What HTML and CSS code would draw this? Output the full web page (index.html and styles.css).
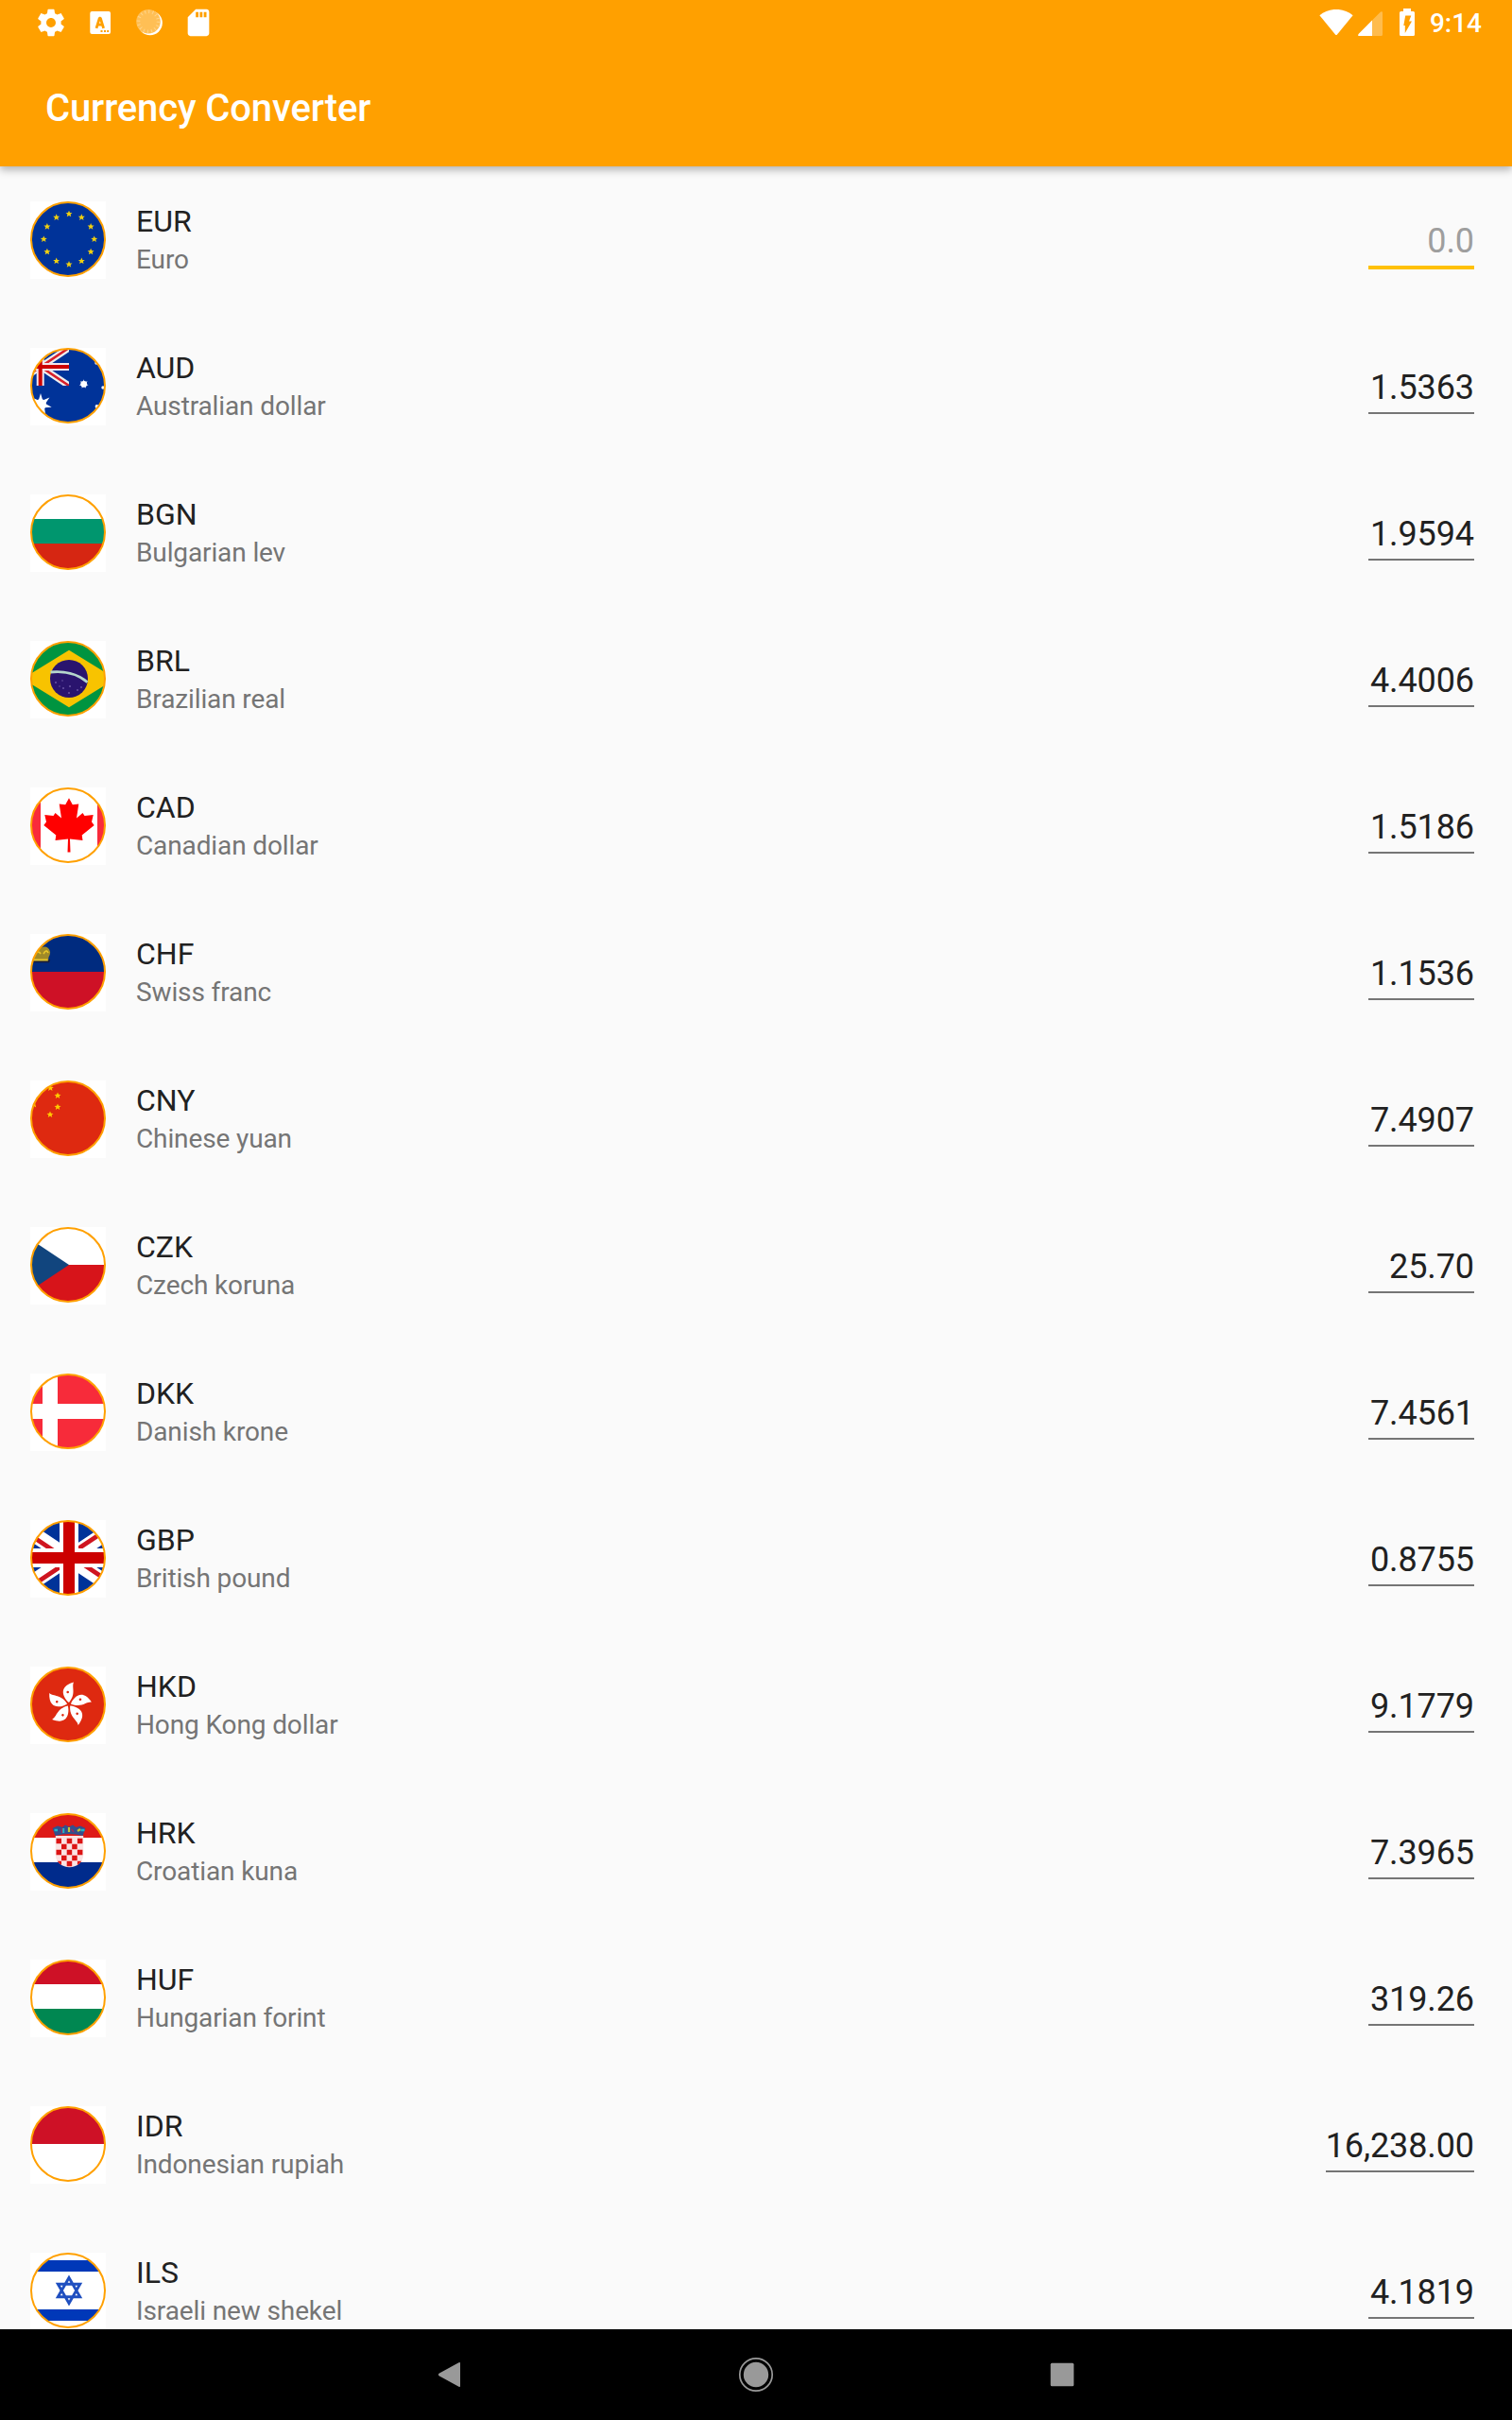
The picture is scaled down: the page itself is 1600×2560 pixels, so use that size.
FILE: index.html
```html
<!DOCTYPE html>
<html lang="en">
<head>
<meta charset="utf-8">
<title>Currency Converter</title>
<link rel="stylesheet" href="styles.css">
</head>
<body>
<svg class="defs" width="0" height="0" aria-hidden="true">
  <defs>
    <clipPath id="disc"><circle cx="40" cy="40" r="39.2"/></clipPath>
    <clipPath id="canton"><rect x="-19" y="0" width="60" height="40"/></clipPath>
    <clipPath id="shield"><path d="M26.8 24H56.2V44C56.2 52 49 57.3 41.5 57.3C34 57.3 26.8 52 26.8 44Z"/></clipPath>
    <circle id="ring" cx="40" cy="40" r="39" fill="none" stroke="#ffa000" stroke-width="2"/>
    <path id="star" d="M0-3.6L1-1.2L3.5-1.1L1.6.5L2.2 3L0 1.6L-2.2 3L-1.6.5L-3.5-1.1L-1-1.2Z"/>
    <path id="star7" d="M0-12L2.2-4.6L9.4-7.5L5-1.1L11.7 2.7L4 3.2L5.2 10.8L0 5.1L-5.2 10.8L-4 3.2L-11.7 2.7L-5-1.1L-9.4-7.5L-2.2-4.6Z"/>
    <g id="petal"><path d="M0-2C-5-6-13-18.500 5-23.500C2.500-18 8-11.500 0-2Z" fill="#fff"/><circle cx="-1.300" cy="-13" r="1.300" fill="#de2910"/></g>
  </defs>
</svg>

<div class="screen">
  <header class="appbar">
    <div class="status">
      <div class="status-left">
        <svg width="34" height="34" viewBox="0 0 24 24" fill="#fff"><path d="M19.430 12.980c.04-.32.07-.64.07-.98s-.03-.66-.07-.98l2.110-1.650c.19-.15.24-.42.12-.64l-2-3.460c-.12-.22-.39-.3-.61-.22l-2.490 1c-.52-.4-1.080-.73-1.690-.98l-.38-2.650C14.460 2.180 14.250 2 14 2h-4c-.25 0-.46.18-.49.42l-.38 2.650c-.61.25-1.170.59-1.690.98l-2.490-1c-.23-.09-.49 0-.61.22l-2 3.460c-.13.22-.07.49.12.64l2.110 1.650c-.04.32-.07.65-.07.98s.03.66.07.98l-2.110 1.650c-.19.15-.24.42-.12.64l2 3.460c.12.22.39.3.61.22l2.490-1c.52.4 1.080.73 1.690.98l.38 2.650c.03.24.24.42.49.42h4c.25 0 .46-.18.49-.42l.38-2.650c.61-.25 1.170-.59 1.690-.98l2.490 1c.23.09.49 0 .61-.22l2-3.460c.12-.22.07-.49-.12-.64l-2.110-1.650zM12 15.500c-1.930 0-3.500-1.570-3.500-3.500s1.570-3.500 3.500-3.500 3.500 1.570 3.500 3.500-1.570 3.500-3.500 3.500z"/></svg>
        <svg width="34" height="34" viewBox="0 0 34 34"><rect x="6.300" y="5" width="21.700" height="24" rx="2" fill="#fff"/><path d="M13 22.800L16.300 12.200H17.300L20.600 22.800M14.500 19.200H19.200" fill="none" stroke="#ffa000" stroke-width="2.800" stroke-linejoin="bevel"/><path d="M17.500 25h2v2h-2zM21 25h2v2h-2zM24.200 25h2v2h-2z" fill="#ffa000"/></svg>
        <svg width="34" height="34" viewBox="0 0 34 34"><circle cx="17.800" cy="17.300" r="13" fill="#fff"/><circle cx="16" cy="15.800" r="12.800" fill="#ffbf55"/><circle cx="16" cy="15.800" r="10.500" fill="none" stroke="#ffd48a" stroke-width="3.600" stroke-dasharray="1 3.120"/></svg>
        <svg width="34" height="34" viewBox="0 0 24 24" fill="#fff"><path d="M18 2h-8L4.020 8 4 20c0 1.100.9 2 2 2h12c1.100 0 2-.9 2-2V4c0-1.100-.9-2-2-2zm-6 6h-2V4h2v4zm3 0h-2V4h2v4zm3 0h-2V4h2v4z"/></svg>
      </div>
      <div class="status-right">
        <svg class="wifi" width="36" height="28" viewBox="0 0 36 28"><path d="M.4 6.200C10-2.200 26-2.200 35.600 6.200L19 26.500Q18 27.700 17 26.500Z" fill="#fff"/></svg>
        <svg class="signal" width="26" height="26" viewBox="0 0 26 26"><path d="M24 .5Q26-.5 26 1.500V24.500Q26 26 24.500 26H1.500Q-.5 26 .6 24Z" fill="#fff" opacity=".3"/><path d="M15 9.500V26H1.500Q-.5 26 .6 24Z" fill="#fff"/></svg>
        <svg class="battery" width="16" height="29" viewBox="0 0 16 29"><path d="M4 0H12V3H14.500Q16 3 16 4.500V27.500Q16 29 14.500 29H1.500Q0 29 0 27.500V4.500Q0 3 1.500 3H4Z" fill="#fff"/><path d="M6.200 7.500H12.300L10 13.500H13L5.800 26V18H4.300Z" fill="#ffa000"/></svg>
        <span class="clock">9:14</span>
      </div>
    </div>
    <div class="toolbar"><h1 class="title">Currency Converter</h1></div>
  </header>

  <main class="list">
    <div class="row">
      <svg class="flag" viewBox="0 0 80 82"><g clip-path="url(#disc)"><rect width="80" height="80" fill="#039"/><g fill="#f0d010"><use href="#star" x="41" y="13.300"/><use href="#star" x="54.300" y="16.900"/><use href="#star" x="64.100" y="26.700"/><use href="#star" x="67.700" y="40"/><use href="#star" x="64.100" y="53.300"/><use href="#star" x="54.300" y="63.100"/><use href="#star" x="41" y="66.700"/><use href="#star" x="27.700" y="63.100"/><use href="#star" x="17.900" y="53.300"/><use href="#star" x="14.300" y="40"/><use href="#star" x="17.900" y="26.700"/><use href="#star" x="27.700" y="16.900"/></g></g><use href="#ring"/></svg>
      <div class="names"><div class="code">EUR</div><div class="name">Euro</div></div>
      <div class="amount amount-active">0.0</div>
    </div>
    <div class="row">
      <svg class="flag" viewBox="0 0 80 82"><g clip-path="url(#disc)"><rect width="80" height="80" fill="#039"/><g clip-path="url(#canton)" fill="none"><path d="M-19 0L41 40M-19 40L41 0" stroke="#eee" stroke-width="7"/><path d="M-19 0L41 40M-19 40L41 0" stroke="#d8202a" stroke-width="2.600"/><path d="M-19 20H41M10.700 0V40" stroke="#f2e6ec" stroke-width="8"/><path d="M-19 20H41M10.700 0V40" stroke="#c00" stroke-width="4"/></g><g fill="#fff"><use href="#star7" x="11" y="60"/><circle cx="11" cy="60" r="6"/><use href="#star7" transform="translate(56.700 38.300) scale(.42)"/><circle cx="56.700" cy="38.300" r="3.400"/><circle cx="70" cy="16" r="1.700"/><circle cx="77" cy="42" r="1.700"/><circle cx="70.500" cy="62" r="1.900"/></g></g><use href="#ring"/></svg>
      <div class="names"><div class="code">AUD</div><div class="name">Australian dollar</div></div>
      <div class="amount">1.5363</div>
    </div>
    <div class="row">
      <svg class="flag" viewBox="0 0 80 82"><g clip-path="url(#disc)"><rect width="80" height="26" fill="#fff"/><rect y="26" width="80" height="26" fill="#00966e"/><rect y="52" width="80" height="28" fill="#d62612"/></g><use href="#ring"/></svg>
      <div class="names"><div class="code">BGN</div><div class="name">Bulgarian lev</div></div>
      <div class="amount">1.9594</div>
    </div>
    <div class="row">
      <svg class="flag" viewBox="0 0 80 82"><g clip-path="url(#disc)"><rect width="80" height="80" fill="#009440"/><path d="M41 9.800L90 40L41 70.200L-8 40Z" fill="#f8c300"/><circle cx="41" cy="40" r="20" fill="#2a146e"/><path d="M21.500 33C35 31.500 50 34.500 60.500 43.800" fill="none" stroke="#b5d6cc" stroke-width="2.800"/><g fill="#6a55a5"><circle cx="27" cy="44" r="1"/><circle cx="34" cy="42" r=".8"/><circle cx="35" cy="50" r="1"/><circle cx="42" cy="48" r="1"/><circle cx="41" cy="55" r="1"/><circle cx="50" cy="52" r="1"/><circle cx="54" cy="49" r="1"/><circle cx="31" cy="48" r=".8"/></g></g><use href="#ring"/></svg>
      <div class="names"><div class="code">BRL</div><div class="name">Brazilian real</div></div>
      <div class="amount">4.4006</div>
    </div>
    <div class="row">
      <svg class="flag" viewBox="0 0 80 82"><g clip-path="url(#disc)"><rect width="80" height="80" fill="#fff"/><path d="M0 0H11V80H0ZM71 0H80V80H71Z" fill="#f92b3b"/><path d="M41 11.300L44.800 18.200L51.300 17.500L49 32.500L55.500 27L57.500 30L66.700 29L65 36.500L67.700 40L54.700 50.500L55.500 56L42 54.500L42.500 68.500H39.500L40 54.500L26.500 56L27.300 50.500L14.300 40L17 36.500L15.300 29L24.500 30L26.500 27L33 32.500L30.700 17.500L37.200 18.200Z" fill="#f00"/></g><use href="#ring"/></svg>
      <div class="names"><div class="code">CAD</div><div class="name">Canadian dollar</div></div>
      <div class="amount">1.5186</div>
    </div>
    <div class="row">
      <svg class="flag" viewBox="0 0 80 82"><g clip-path="url(#disc)"><rect width="80" height="40" fill="#002b7f"/><rect y="40" width="80" height="40" fill="#ce1126"/><path d="M0 29.500H19.500L20.500 27" fill="none" stroke="#1d1d35" stroke-width="1.500"/><path d="M0 28.500V18Q5 14 10 16L13 13.800Q19 12.500 21 18.500Q21.500 22 19.500 24.500L19 28.500Z" fill="#a08a28"/><path d="M1 27.300H18.500M5 21Q9 17 11 21M14 21Q17 15.500 19 20" fill="none" stroke="#e8c62a" stroke-width="1.700"/></g><use href="#ring"/></svg>
      <div class="names"><div class="code">CHF</div><div class="name">Swiss franc</div></div>
      <div class="amount">1.1536</div>
    </div>
    <div class="row">
      <svg class="flag" viewBox="0 0 80 82"><g clip-path="url(#disc)"><rect width="80" height="80" fill="#de2910"/><g fill="#fc0"><use href="#star" x="21.300" y="8"/><use href="#star" x="29" y="16"/><use href="#star" x="29" y="28"/><use href="#star" x="21" y="36"/><use href="#star" transform="translate(0 20) scale(2.800)"/></g></g><use href="#ring"/></svg>
      <div class="names"><div class="code">CNY</div><div class="name">Chinese yuan</div></div>
      <div class="amount">7.4907</div>
    </div>
    <div class="row">
      <svg class="flag" viewBox="0 0 80 82"><g clip-path="url(#disc)"><rect width="80" height="40" fill="#fff"/><rect y="40" width="80" height="40" fill="#d7141a"/><path d="M-19 0L41 40L-19 80Z" fill="#11457e"/></g><use href="#ring"/></svg>
      <div class="names"><div class="code">CZK</div><div class="name">Czech koruna</div></div>
      <div class="amount">25.70</div>
    </div>
    <div class="row">
      <svg class="flag" viewBox="0 0 80 82"><g clip-path="url(#disc)"><rect width="80" height="80" fill="#f72b3a"/><path d="M13 0H29V80H13ZM0 32H80V48H0Z" fill="#fff"/></g><use href="#ring"/></svg>
      <div class="names"><div class="code">DKK</div><div class="name">Danish krone</div></div>
      <div class="amount">7.4561</div>
    </div>
    <div class="row">
      <svg class="flag" viewBox="0 0 80 82"><g clip-path="url(#disc)" fill="none"><rect width="80" height="80" fill="#039"/><path d="M-19 0L101 80M-19 80L101 0" stroke="#fff" stroke-width="16"/><path d="M-19 3.200L41 43.200M41 36.800L101 76.800M-19 83.200L41 43.200M41 36.800L101-3.200" stroke="#cf1520" stroke-width="4.800"/><path d="M0 40H80M41 0V80" stroke="#fff" stroke-width="20"/><path d="M0 40H80M41 0V80" stroke="#c00" stroke-width="12"/></g><use href="#ring"/></svg>
      <div class="names"><div class="code">GBP</div><div class="name">British pound</div></div>
      <div class="amount">0.8755</div>
    </div>
    <div class="row">
      <svg class="flag" viewBox="0 0 80 82"><g clip-path="url(#disc)"><rect width="80" height="80" fill="#de2910"/><g transform="translate(41 40)"><use href="#petal"/><use href="#petal" transform="rotate(72)"/><use href="#petal" transform="rotate(144)"/><use href="#petal" transform="rotate(216)"/><use href="#petal" transform="rotate(288)"/></g></g><use href="#ring"/></svg>
      <div class="names"><div class="code">HKD</div><div class="name">Hong Kong dollar</div></div>
      <div class="amount">9.1779</div>
    </div>
    <div class="row">
      <svg class="flag" viewBox="0 0 80 82"><g clip-path="url(#disc)"><rect width="80" height="26" fill="#de1a17"/><rect y="26" width="80" height="26" fill="#fff"/><rect y="52" width="80" height="28" fill="#002b8c"/><g clip-path="url(#shield)"><rect x="26" y="24" width="31" height="34" fill="#fbe3e3"/><path d="M27.500 29.500H55.500M27.500 41.500H55.500M27.500 53.500H55.500" stroke="#dc1414" stroke-width="5.400" stroke-dasharray="5.500 5.700"/><path d="M33 35.500H50.500M33 47.500H50.500" stroke="#dc1414" stroke-width="5.400" stroke-dasharray="5.500 5.700"/></g><path d="M26.500 24L23.500 16L29 13.500L34 15L37 12.500L41 14.500L45 12.500L48.500 15L53 13.500L58.500 16L55.500 24Q41 20 26.500 24Z" fill="#344f8c"/><path d="M25.500 18H29M35 16V21M53.500 18H57.500" stroke="#21b5c8" stroke-width="2.400"/><path d="M41 15V20M50 19L53 17" stroke="#c4c836" stroke-width="2.200"/><path d="M33.500 16V21M43.500 17L46 20" stroke="#a02b58" stroke-width="1.400"/></g><use href="#ring"/></svg>
      <div class="names"><div class="code">HRK</div><div class="name">Croatian kuna</div></div>
      <div class="amount">7.3965</div>
    </div>
    <div class="row">
      <svg class="flag" viewBox="0 0 80 82"><g clip-path="url(#disc)"><rect width="80" height="26" fill="#ce1126"/><rect y="26" width="80" height="26" fill="#fff"/><rect y="52" width="80" height="28" fill="#008751"/></g><use href="#ring"/></svg>
      <div class="names"><div class="code">HUF</div><div class="name">Hungarian forint</div></div>
      <div class="amount">319.26</div>
    </div>
    <div class="row">
      <svg class="flag" viewBox="0 0 80 82"><g clip-path="url(#disc)"><rect width="80" height="40" fill="#ce1126"/><rect y="40" width="80" height="40" fill="#fff"/></g><use href="#ring"/></svg>
      <div class="names"><div class="code">IDR</div><div class="name">Indonesian rupiah</div></div>
      <div class="amount">16,238.00</div>
    </div>
    <div class="row">
      <svg class="flag" viewBox="0 0 80 82"><g clip-path="url(#disc)"><rect width="80" height="80" fill="#fff"/><path d="M0 8H80V20H0ZM0 60H80V72H0Z" fill="#0038b8"/><path d="M41 26.500L52.700 46.800H29.300ZM41 53.500L29.300 33.200H52.700Z" fill="none" stroke="#1f4fc0" stroke-width="2.900"/></g><use href="#ring"/></svg>
      <div class="names"><div class="code">ILS</div><div class="name">Israeli new shekel</div></div>
      <div class="amount">4.1819</div>
    </div>
  </main>

  <nav class="navbar">
    <svg width="48" height="48" viewBox="0 0 48 48" fill="#999"><path d="M22.500 11.300Q24 10.200 24 12V36Q24 37.800 22.500 36.700L1.500 25.300Q0 24 1.500 22.700Z"/></svg>
    <svg width="48" height="48" viewBox="0 0 48 48"><circle cx="24" cy="24" r="13.200" fill="#999"/><circle cx="24" cy="24" r="17.200" fill="none" stroke="#999" stroke-width="1.700"/></svg>
    <svg width="48" height="48" viewBox="0 0 48 48"><rect x="22.700" y="11.700" width="24.600" height="24.600" rx="1.500" fill="#999"/></svg>
  </nav>
</div>
</body>
</html>
```

FILE: styles.css
```css
* {
  box-sizing: border-box;
}

body {
  margin: 0;
  background: #fafafa;
  font-family: Roboto, "Noto Sans", sans-serif;
  color: #212121;
}

svg {
  display: block;
  flex: none;
}

.defs {
  position: absolute;
}

.screen {
  display: flex;
  flex-direction: column;
  width: 1600px;
  height: 2560px;
  overflow: hidden;
}

.appbar {
  flex: none;
  height: 176px;
  background: #ffa000;
  color: #fff;
  box-shadow: 0 4px 8px rgba(0, 0, 0, 0.28);
  z-index: 1;
}

.status {
  display: flex;
  justify-content: space-between;
  height: 48px;
  padding: 0 32px 0 37px;
}

.status-left {
  display: flex;
  align-items: center;
  gap: 18px;
}

.status-right {
  display: flex;
  align-items: flex-start;
}

.wifi {
  margin-top: 10px;
}

.signal {
  margin: 12px 18px 0 5px;
}

.battery {
  margin-top: 9px;
}

.clock {
  margin-left: 16px;
  font-size: 28px;
  font-weight: 500;
  line-height: 50px;
}

.toolbar {
  display: flex;
  align-items: center;
  height: 128px;
  padding: 6px 48px 0;
}

.title {
  margin: 0;
  font-size: 40px;
  font-weight: 500;
  letter-spacing: -0.12px;
  line-height: 48px;
}

.list {
  flex: 1;
  min-height: 0;
  overflow: hidden;
}

.row {
  display: flex;
  align-items: flex-start;
  height: 155px;
  padding: 37px 40px 0 32px;
}

.flag {
  width: 80px;
  height: 82px;
  margin-right: 32px;
  background: #fff;
}

.names {
  flex: 1;
  padding-top: 2px;
}

.code {
  font-size: 32px;
  line-height: 38px;
}

.name {
  padding-top: 5px;
  font-size: 28px;
  letter-spacing: -0.12px;
  line-height: 34px;
  color: #757575;
}

.amount {
  min-width: 112px;
  height: 70px;
  padding-top: 21px;
  border-bottom: 2px solid #757575;
  font-size: 36px;
  letter-spacing: -0.1px;
  line-height: 42px;
  text-align: right;
}

.amount-active {
  height: 72px;
  border-bottom: 4px solid #ffc107;
  color: #9e9e9e;
}

.navbar {
  display: flex;
  flex: none;
  align-items: center;
  justify-content: space-between;
  height: 96px;
  padding: 0 463px;
  background: #000;
}
```
